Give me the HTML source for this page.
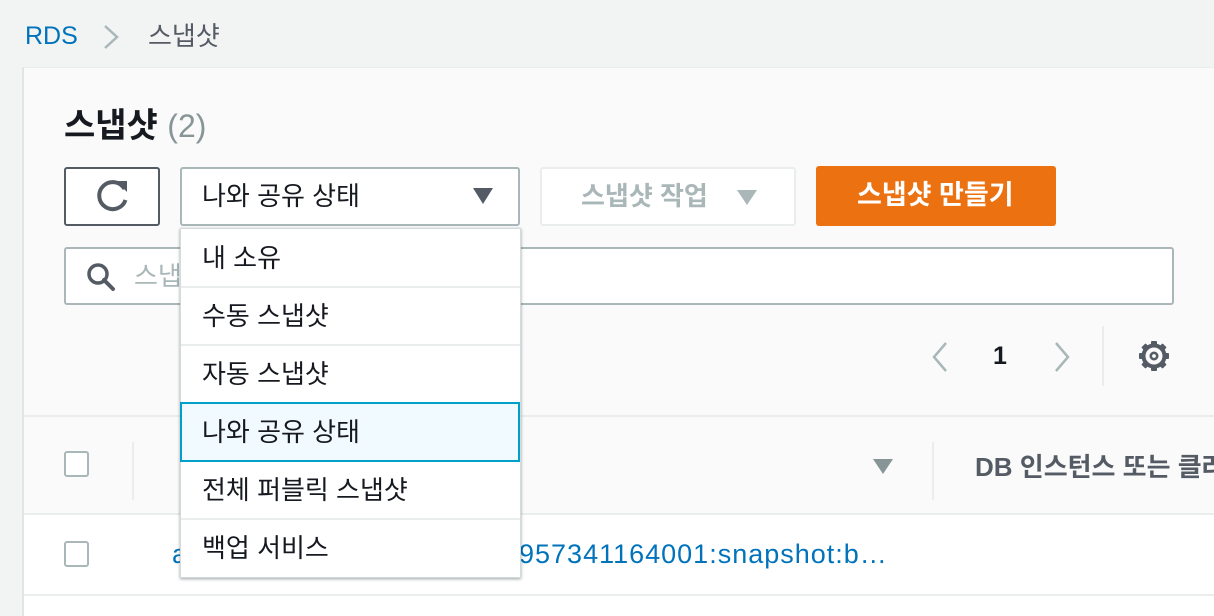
<!DOCTYPE html>
<html><head><meta charset="utf-8"><style>
*{box-sizing:border-box;margin:0;padding:0}
body{width:1214px;height:616px;overflow:hidden;background:#f2f3f3;font-family:"Liberation Sans","Noto Sans CJK KR",sans-serif;position:relative;color:#16191f}
.a{position:absolute}
.t{position:absolute;white-space:nowrap;line-height:1}
.m{font-size:26px}
</style></head><body>
<div class="t" style="left:25px;top:24px;font-size:25px;color:#0073bb">RDS</div>
<svg class="a" style="left:100px;top:22px" width="24" height="30"><path d="M5 4 L17 15 L5 26" fill="none" stroke="#aab7b8" stroke-width="2.5"/></svg>
<div class="t m" style="left:148px;top:23px;color:#545b64">스냅샷</div>

<div class="a" style="left:22px;top:67px;width:1192px;height:549px;background:#fafafa;border-left:2px solid #e1e4e4;border-top:1px solid #eaeded"></div>
<div class="t" style="left:64px;top:109px;font-size:34px;font-weight:bold">스냅샷 <span style="color:#879596;font-weight:normal;font-size:32px">(2)</span></div>

<div class="a" style="left:64px;top:167px;width:96px;height:59px;border:2px solid #545b64;border-radius:3px;background:#fff"></div>
<svg class="a" style="left:94px;top:178px" width="36" height="36"><path d="M30.5 11 A13.5 13.5 0 1 0 31.5 22" fill="none" stroke="#545b64" stroke-width="4"/><path d="M22 3 L33 3 L33 14 Z" fill="#545b64"/></svg>

<div class="a" style="left:180px;top:167px;width:340px;height:59px;border:2px solid #aab7b8;border-radius:3px;background:#fff"></div>
<div class="t m" style="left:202px;top:183px">나와 공유 상태</div>
<svg class="a" style="left:472px;top:186px" width="22" height="20"><path d="M1 2 L21 2 L11 18 Z" fill="#545b64"/></svg>

<div class="a" style="left:540px;top:167px;width:256px;height:59px;border:2px solid #eaeded;border-radius:3px;background:#fff"></div>
<div class="t m" style="left:581px;top:183px;font-weight:bold;color:#aab7b8">스냅샷 작업</div>
<svg class="a" style="left:736px;top:188px" width="22" height="18"><path d="M1 2 L21 2 L11 17 Z" fill="#aab7b8"/></svg>

<div class="a" style="left:816px;top:166px;width:240px;height:60px;background:#ec7211;border-radius:3px"></div>
<div class="t" style="left:857px;top:182px;font-size:27px;font-weight:bold;color:#fff">스냅샷 만들기</div>

<div class="a" style="left:64px;top:247px;width:1110px;height:58px;border:2px solid #aab7b8;border-radius:3px;background:#fff"></div>
<svg class="a" style="left:84px;top:260px" width="34" height="34"><circle cx="14" cy="14" r="9" fill="none" stroke="#545b64" stroke-width="3.5"/><path d="M20 20 L29 29" stroke="#545b64" stroke-width="4" stroke-linecap="round"/></svg>
<div class="t m" style="left:134px;top:263px;color:#aab7b8">스냅샷 검색</div>

<svg class="a" style="left:928px;top:340px" width="24" height="34"><path d="M18 3 L6 17 L18 31" fill="none" stroke="#aab7b8" stroke-width="2.5"/></svg>
<div class="t" style="left:993px;top:344px;font-size:25px;font-weight:bold">1</div>
<svg class="a" style="left:1050px;top:340px" width="24" height="34"><path d="M6 3 L18 17 L6 31" fill="none" stroke="#aab7b8" stroke-width="2.5"/></svg>
<div class="a" style="left:1102px;top:326px;width:2px;height:60px;background:#eaeded"></div>
<svg class="a" style="left:1137px;top:339px" width="34" height="34" viewBox="0 0 34 34"><g fill="#545b64"><g id="g"><rect x="14" y="2" width="6" height="6" rx="1"/></g><use href="#g" transform="rotate(45 17 17)"/><use href="#g" transform="rotate(90 17 17)"/><use href="#g" transform="rotate(135 17 17)"/><use href="#g" transform="rotate(180 17 17)"/><use href="#g" transform="rotate(225 17 17)"/><use href="#g" transform="rotate(270 17 17)"/><use href="#g" transform="rotate(315 17 17)"/></g><circle cx="17" cy="17" r="10.5" fill="none" stroke="#545b64" stroke-width="4"/><circle cx="17" cy="17" r="3.2" fill="none" stroke="#545b64" stroke-width="2.6"/></svg>

<div class="a" style="left:24px;top:415px;width:1190px;height:2px;background:#eaeded"></div>
<div class="a" style="left:64px;top:451px;width:25px;height:26px;border:2px solid #aab7b8;border-radius:3px;background:#fff"></div>
<div class="a" style="left:132px;top:442px;width:2px;height:58px;background:#eaeded"></div>
<svg class="a" style="left:872px;top:457px" width="22" height="18"><path d="M1 2 L21 2 L11 17 Z" fill="#879596"/></svg>
<div class="a" style="left:932px;top:442px;width:2px;height:58px;background:#eaeded"></div>
<div class="t" style="left:975px;top:454px;font-size:26px;font-weight:bold;color:#545b64">DB 인스턴스 또는 클러스터</div>

<div class="a" style="left:24px;top:514px;width:1190px;height:102px;background:#fff"></div>
<div class="a" style="left:24px;top:513px;width:1190px;height:2px;background:#eaeded"></div>
<div class="a" style="left:24px;top:594px;width:1190px;height:2px;background:#eaeded"></div>
<div class="a" style="left:64px;top:541px;width:25px;height:26px;border:2px solid #aab7b8;border-radius:3px;background:#fff"></div>
<div class="t" style="left:172px;top:541px;font-size:27px;color:#0073bb">arn:aws:rds</div>
<div class="t" style="left:519px;top:541px;font-size:27px;letter-spacing:1px;color:#0073bb">957341164001:snapshot:b…</div>

<div class="a" style="left:180px;top:228px;width:341px;height:350px;background:#fff;border:1px solid #d5dbdb;box-shadow:0 1px 3px rgba(0,28,36,.4)">
</div>
<div class="a" style="left:181px;top:286px;width:339px;height:2px;background:#eaeded"></div>
<div class="a" style="left:181px;top:344px;width:339px;height:2px;background:#eaeded"></div>
<div class="a" style="left:181px;top:518px;width:339px;height:2px;background:#eaeded"></div>
<div class="a" style="left:180px;top:402px;width:340px;height:60px;background:#f1faff;border:2px solid #00a1c9"></div>
<div class="t m" style="left:202px;top:245px">내 소유</div>
<div class="t m" style="left:202px;top:303px">수동 스냅샷</div>
<div class="t m" style="left:202px;top:361px">자동 스냅샷</div>
<div class="t m" style="left:202px;top:419px">나와 공유 상태</div>
<div class="t m" style="left:202px;top:477px">전체 퍼블릭 스냅샷</div>
<div class="t m" style="left:202px;top:535px">백업 서비스</div>
</body></html>
